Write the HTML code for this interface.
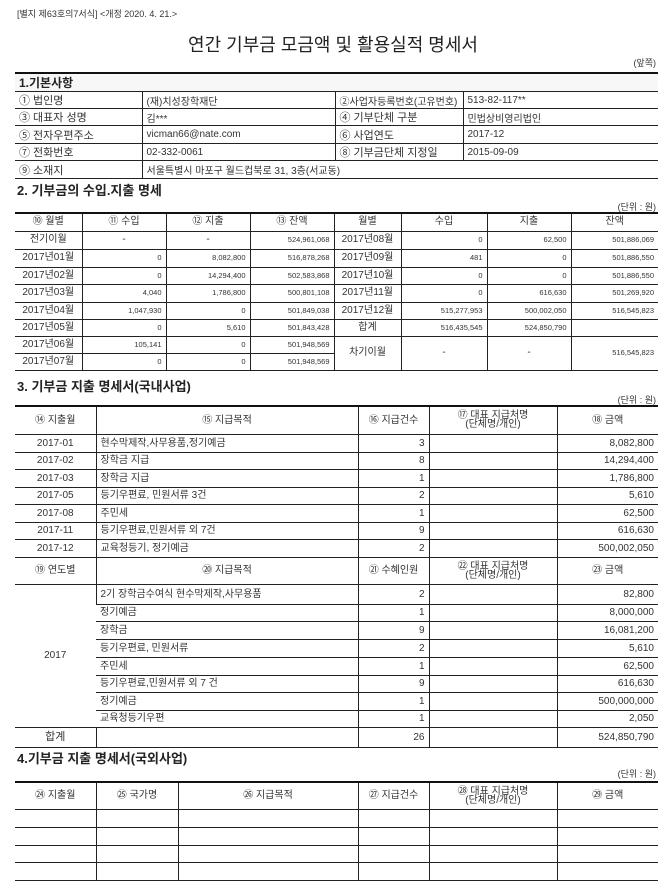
<!DOCTYPE html>
<html><head><meta charset="utf-8"><style>
*{margin:0;padding:0;box-sizing:border-box}
body{width:666px;height:889px;background:#fff;position:relative;font-family:"Liberation Sans","Noto Sans CJK KR","NanumGothic",sans-serif;color:#333;overflow:hidden}
.a{position:absolute}
table{position:absolute;left:15px;width:643px;border-collapse:collapse;table-layout:fixed}
td{border-top:1px solid #222;border-bottom:1px solid #222;border-left:1px solid #222;white-space:nowrap;overflow:hidden;padding:0 4px;font-size:10px;vertical-align:middle}
td:first-child{border-left:none}
tr:first-child td{border-top:2px solid #111}
.c{text-align:center}.r{text-align:right}
.s td{font-size:7.5px;line-height:10px}
.s td.m{font-size:10px}
.h{font-size:13px;font-weight:bold;color:#222}
.u{font-size:9px;right:10px}
.t2 td{line-height:9px}
</style></head><body>
<div class="a" style="left:17px;top:7px;font-size:9px">[별지 제63호의7서식] &lt;개정 2020. 4. 21.&gt;</div>
<div class="a" style="left:0;width:666px;top:31px;text-align:center;font-size:18px;color:#222">연간 기부금 모금액 및 활용실적 명세서</div>
<div class="a u" style="top:56px">(앞쪽)</div>

<table style="top:72px">
<col style="width:127px"><col style="width:193px"><col style="width:128px"><col style="width:195px">
<tr style="height:17px;background:#f7f7f7"><td colspan="4" class="h" style="font-size:12px">1.기본사항</td></tr>
<tr style="height:17px"><td style="font-size:11px">① 법인명</td><td>(재)치성장학재단</td><td>②사업자등록번호(고유번호)</td><td>513-82-117**</td></tr>
<tr style="height:17px"><td style="font-size:11px">③ 대표자 성명</td><td>김***</td><td style="font-size:11px">④ 기부단체 구분</td><td>민법상비영리법인</td></tr>
<tr style="height:18px"><td style="font-size:11px">⑤ 전자우편주소</td><td>vicman66@nate.com</td><td style="font-size:11px">⑥ 사업연도</td><td>2017-12</td></tr>
<tr style="height:17px"><td style="font-size:11px">⑦ 전화번호</td><td>02-332-0061</td><td style="font-size:11px">⑧ 기부금단체 지정일</td><td>2015-09-09</td></tr>
<tr style="height:18px"><td style="font-size:11px">⑨ 소재지</td><td colspan="3">서울특별시 마포구 월드컵북로 31, 3층(서교동)</td></tr>
</table>

<div class="a h" style="left:17px;top:180px">2. 기부금의 수입.지출 명세</div>
<div class="a u" style="top:200px">(단위 : 원)</div>
<table class="s" style="top:212px">
<col style="width:67px"><col style="width:84px"><col style="width:84px"><col style="width:84px"><col style="width:67px"><col style="width:86px"><col style="width:84px"><col style="width:87px">
<tr style="height:18px"><td class="c m">⑩ 월별</td><td class="c m">⑪ 수입</td><td class="c m">⑫ 지출</td><td class="c m">⑬ 잔액</td><td class="c m">월별</td><td class="c m">수입</td><td class="c m">지출</td><td class="c m">잔액</td></tr>
<tr style="height:18px"><td class="c m">전기이월</td><td class="c m">-</td><td class="c m">-</td><td class="r">524,961,068</td><td class="c m">2017년08월</td><td class="r">0</td><td class="r">62,500</td><td class="r">501,886,069</td></tr>
<tr style="height:18px"><td class="c m">2017년01월</td><td class="r">0</td><td class="r">8,082,800</td><td class="r">516,878,268</td><td class="c m">2017년09월</td><td class="r">481</td><td class="r">0</td><td class="r">501,886,550</td></tr>
<tr style="height:17px"><td class="c m">2017년02월</td><td class="r">0</td><td class="r">14,294,400</td><td class="r">502,583,868</td><td class="c m">2017년10월</td><td class="r">0</td><td class="r">0</td><td class="r">501,886,550</td></tr>
<tr style="height:18px"><td class="c m">2017년03월</td><td class="r">4,040</td><td class="r">1,786,800</td><td class="r">500,801,108</td><td class="c m">2017년11월</td><td class="r">0</td><td class="r">616,630</td><td class="r">501,269,920</td></tr>
<tr style="height:17px"><td class="c m">2017년04월</td><td class="r">1,047,930</td><td class="r">0</td><td class="r">501,849,038</td><td class="c m">2017년12월</td><td class="r">515,277,953</td><td class="r">500,002,050</td><td class="r">516,545,823</td></tr>
<tr style="height:17px"><td class="c m">2017년05월</td><td class="r">0</td><td class="r">5,610</td><td class="r">501,843,428</td><td class="c m">합계</td><td class="r">516,435,545</td><td class="r">524,850,790</td><td></td></tr>
<tr style="height:17px"><td class="c m">2017년06월</td><td class="r">105,141</td><td class="r">0</td><td class="r">501,948,569</td><td class="c m" rowspan="2">차기이월</td><td class="c m" rowspan="2">-</td><td class="c m" rowspan="2">-</td><td class="r" rowspan="2">516,545,823</td></tr>
<tr style="height:17px"><td class="c m">2017년07월</td><td class="r">0</td><td class="r">0</td><td class="r">501,948,569</td></tr>
</table>

<div class="a h" style="left:17px;top:376px">3. 기부금 지출 명세서(국내사업)</div>
<div class="a u" style="top:393px">(단위 : 원)</div>
<table class="t2" style="top:405px">
<col style="width:81px"><col style="width:262px"><col style="width:71px"><col style="width:128px"><col style="width:101px">
<tr style="height:28px"><td class="c">⑭ 지출월</td><td class="c">⑮ 지급목적</td><td class="c">⑯ 지급건수</td><td class="c">⑰ 대표 지급처명<br>(단체명/개인)</td><td class="c">⑱ 금액</td></tr>
<tr style="height:18px"><td class="c">2017-01</td><td>현수막제작,사무용품,정기예금</td><td class="r">3</td><td></td><td class="r">8,082,800</td></tr>
<tr style="height:17px"><td class="c">2017-02</td><td>장학금 지급</td><td class="r">8</td><td></td><td class="r">14,294,400</td></tr>
<tr style="height:18px"><td class="c">2017-03</td><td>장학금 지급</td><td class="r">1</td><td></td><td class="r">1,786,800</td></tr>
<tr style="height:17px"><td class="c">2017-05</td><td>등기우편료, 민원서류 3건</td><td class="r">2</td><td></td><td class="r">5,610</td></tr>
<tr style="height:18px"><td class="c">2017-08</td><td>주민세</td><td class="r">1</td><td></td><td class="r">62,500</td></tr>
<tr style="height:17px"><td class="c">2017-11</td><td>등기우편료,민원서류 외 7건</td><td class="r">9</td><td></td><td class="r">616,630</td></tr>
<tr style="height:18px"><td class="c">2017-12</td><td>교육청등기, 정기예금</td><td class="r">2</td><td></td><td class="r">500,002,050</td></tr>
<tr style="height:27px"><td class="c">⑲ 연도별</td><td class="c">⑳ 지급목적</td><td class="c">㉑ 수혜인원</td><td class="c">㉒ 대표 지급처명<br>(단체명/개인)</td><td class="c">㉓ 금액</td></tr>
<tr style="height:20px"><td class="c" rowspan="8">2017</td><td>2기 장학금수여식 현수막제작,사무용품</td><td class="r">2</td><td></td><td class="r">82,800</td></tr>
<tr style="height:17px"><td>정기예금</td><td class="r">1</td><td></td><td class="r">8,000,000</td></tr>
<tr style="height:18px"><td>장학금</td><td class="r">9</td><td></td><td class="r">16,081,200</td></tr>
<tr style="height:18px"><td>등기우편료, 민원서류</td><td class="r">2</td><td></td><td class="r">5,610</td></tr>
<tr style="height:18px"><td>주민세</td><td class="r">1</td><td></td><td class="r">62,500</td></tr>
<tr style="height:17px"><td>등기우편료,민원서류 외 7 건</td><td class="r">9</td><td></td><td class="r">616,630</td></tr>
<tr style="height:18px"><td>정기예금</td><td class="r">1</td><td></td><td class="r">500,000,000</td></tr>
<tr style="height:17px"><td>교육청등기우편</td><td class="r">1</td><td></td><td class="r">2,050</td></tr>
<tr style="height:20px"><td class="c" style="font-size:11px">합계</td><td></td><td class="r">26</td><td></td><td class="r">524,850,790</td></tr>
</table>

<div class="a h" style="left:17px;top:748px">4.기부금 지출 명세서(국외사업)</div>
<div class="a u" style="top:767px">(단위 : 원)</div>
<table class="t2" style="top:781px">
<col style="width:81px"><col style="width:82px"><col style="width:180px"><col style="width:71px"><col style="width:128px"><col style="width:101px">
<tr style="height:27px"><td class="c">㉔ 지출월</td><td class="c">㉕ 국가명</td><td class="c">㉖ 지급목적</td><td class="c">㉗ 지급건수</td><td class="c">㉘ 대표 지급처명<br>(단체명/개인)</td><td class="c">㉙ 금액</td></tr>
<tr style="height:18px"><td></td><td></td><td></td><td></td><td></td><td></td></tr>
<tr style="height:18px"><td></td><td></td><td></td><td></td><td></td><td></td></tr>
<tr style="height:17px"><td></td><td></td><td></td><td></td><td></td><td></td></tr>
<tr style="height:18px"><td></td><td></td><td></td><td></td><td></td><td></td></tr>
</table>
</body></html>
